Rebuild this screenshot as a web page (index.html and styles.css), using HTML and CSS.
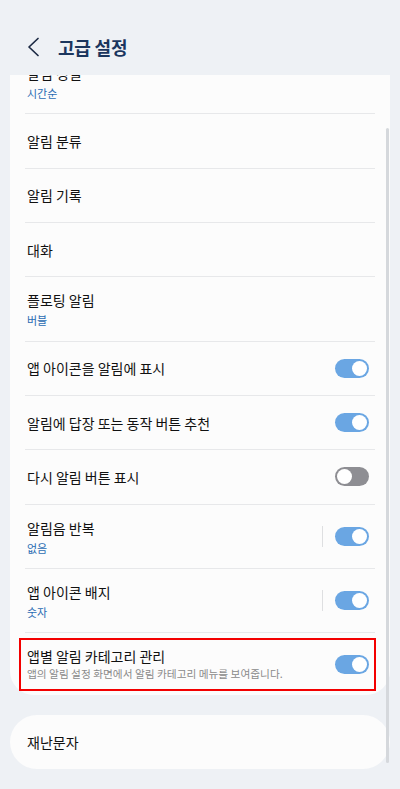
FILE: index.html
```html
<!DOCTYPE html>
<html>
<head>
    <title>고급 설정</title>
    <link rel="stylesheet" href="styles.css">
</head>
<body>
    <div class="header">
        <svg class="back" width="13" height="20" viewBox="0 0 13 20">
            <polyline points="11,1.5 2,10 11,18.5" fill="none" stroke="#1d2a44" stroke-width="1.7" stroke-linecap="round" stroke-linejoin="round"/>
        </svg>
        <h1>고급 설정</h1>
    </div>

    <div class="scroll">
        <div class="card">
            <div class="row double first">
                <div class="text">
                    <div class="title">알림 정렬</div>
                    <div class="sub">시간순</div>
                </div>
            </div>
            <div class="row single">
                <div class="title">알림 분류</div>
            </div>
            <div class="row single">
                <div class="title">알림 기록</div>
            </div>
            <div class="row single">
                <div class="title">대화</div>
            </div>
            <div class="row double">
                <div class="text">
                    <div class="title">플로팅 알림</div>
                    <div class="sub">버블</div>
                </div>
            </div>
            <div class="row single">
                <div class="title">앱 아이콘을 알림에 표시</div>
                <span class="toggle on"></span>
            </div>
            <div class="row single">
                <div class="title">알림에 답장 또는 동작 버튼 추천</div>
                <span class="toggle on"></span>
            </div>
            <div class="row single">
                <div class="title">다시 알림 버튼 표시</div>
                <span class="toggle"></span>
            </div>
            <div class="row double">
                <div class="text">
                    <div class="title">알림음 반복</div>
                    <div class="sub">없음</div>
                </div>
                <span class="sep"></span>
                <span class="toggle on"></span>
            </div>
            <div class="row double">
                <div class="text">
                    <div class="title">앱 아이콘 배지</div>
                    <div class="sub">숫자</div>
                </div>
                <span class="sep"></span>
                <span class="toggle on"></span>
            </div>
            <div class="row desc marked">
                <div class="text">
                    <div class="title">앱별 알림 카테고리 관리</div>
                    <div class="note">앱의 알림 설정 화면에서 알림 카테고리 메뉴를 보여줍니다.</div>
                </div>
                <span class="toggle on"></span>
            </div>
        </div>

        <div class="card pill">
            <div class="title">재난문자</div>
        </div>

        <div class="scrollbar"></div>
    </div>
</body>
</html>
```

FILE: styles.css
```css
body {
    margin: 0;
    width: 400px;
    height: 789px;
    overflow: hidden;
    background-color: #eef1f5;
    font-family: "Noto Sans CJK KR", "Noto Sans", sans-serif;
    color: #111;
}
.header {
    height: 75px;
    display: flex;
    align-items: center;
    padding: 18px 0 0 27px;
    box-sizing: border-box;
}
.back {
    display: block;
}
h1 {
    margin: 0 0 0 18px;
    font-size: 18px;
    font-weight: 700;
    color: #1b365e;
    letter-spacing: -0.2px;
}
.scroll {
    position: relative;
    height: 714px;
    overflow: hidden;
}
.card {
    margin: 2px 10px 0;
    padding: 0 15px;
    background-color: #fcfcfc;
    border-radius: 24px;
}
.row {
    display: flex;
    align-items: center;
    box-sizing: border-box;
    border-bottom: 1px solid #e7e8ea;
}
.row.single {
    height: 54.33px;
}
.row.double {
    height: 64.33px;
    align-items: flex-start;
    padding-top: 13px;
}
.row.double .sep,
.row.double .toggle {
    align-self: center;
    margin-top: -13px;
}
.row.first {
    margin-top: -27px;
}
.row.desc {
    height: 62px;
    border-bottom: none;
    position: relative;
    align-items: flex-start;
    padding-top: 13px;
}
.row.desc .toggle {
    align-self: center;
    margin-top: -13px;
}
.text {
    flex: 1;
}
.title {
    flex: 1;
    font-size: 14px;
    line-height: 20px;
    padding-left: 2px;
}
.sub {
    font-size: 11px;
    line-height: 20px;
    color: #2b6cb3;
    padding-left: 2px;
}
.note {
    font-size: 10.7px;
    line-height: 16px;
    color: #8a8a8a;
    padding-left: 2px;
}
.sep {
    width: 1px;
    height: 21px;
    background-color: #dedfe1;
    margin-right: 12px;
}
.toggle {
    flex: none;
    width: 34px;
    height: 19px;
    border-radius: 10px;
    background-color: #8e8e93;
    margin-right: 6px;
    display: flex;
    align-items: center;
    padding: 0 2px;
    box-sizing: border-box;
}
.toggle::after {
    content: "";
    width: 15px;
    height: 15px;
    border-radius: 50%;
    background-color: #fff;
}
.toggle.on {
    background-color: #6aa6e3;
    justify-content: flex-end;
}
.marked::after {
    content: "";
    position: absolute;
    left: -6px;
    right: -1px;
    top: 5px;
    bottom: 4px;
    border: 2px solid #f30000;
}
.pill {
    margin-top: 20px;
    height: 54px;
    border-radius: 27px;
    display: flex;
    align-items: center;
    padding: 0 15px;
}
.scrollbar {
    position: absolute;
    left: 386px;
    top: 53px;
    width: 3px;
    height: 635px;
    border-radius: 2px;
    background-color: #d5d8dc;
}
```
